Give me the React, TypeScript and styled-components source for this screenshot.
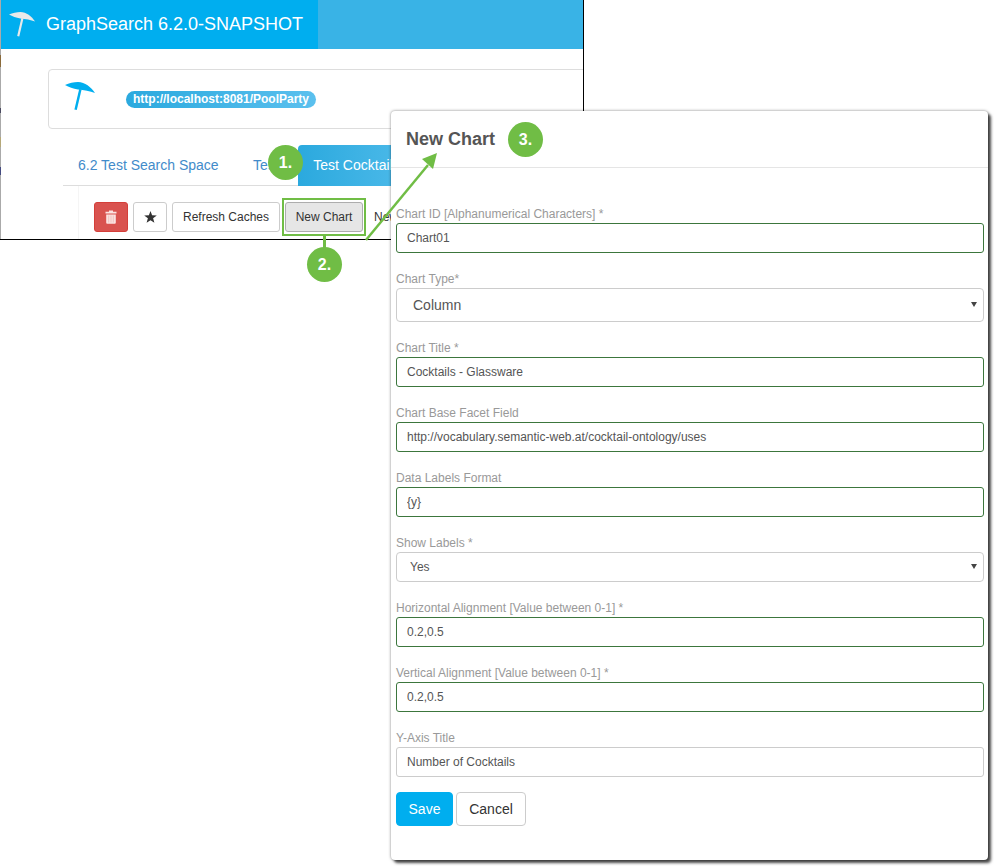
import React, { ReactElement } from "react";
import styled, { createGlobalStyle } from "styled-components";

const GREEN = "#70bd45";
const BLUE = "#00aeef";

const GlobalStyle = createGlobalStyle`
  html, body {
    margin: 0;
    padding: 0;
    background: #fff;
    font-family: "Liberation Sans", Arial, sans-serif;
  }
`;

function Umbrella({ color, width }: { color: string; width: number }): ReactElement {
  return (
    <svg width={width} height={(width * 29) / 31} viewBox='0 0 31 29'>
      <path d='M0 3C4 1 9 0 13 0c7 0 13 5 17 11-5-2-11-3-17-3.500C8 7 4 5 0 3z' fill={color} />
      <path d='M14.200 7 L16.600 7.500 L11.800 28 L9.400 27.500 Z' fill={color} />
    </svg>
  );
}

function TrashIcon(): ReactElement {
  return (
    <svg width='12' height='14' viewBox='0 0 12 14'>
      <path
        d='M4 0.500h4v1.200h3.500v1.800h-11v-1.800H4z M1.200 4.500h9.600v8.200a1 1 0 0 1-1 1H2.200a1 1 0 0 1-1-1z'
        fill='#fbe3e1'
      />
      <path d='M3.700 5.500v7M6 5.500v7M8.300 5.500v7' stroke='#eeb4b0' strokeWidth='0.7' />
    </svg>
  );
}

function StarIcon(): ReactElement {
  return (
    <svg width='13' height='12' viewBox='0 0 13 12'>
      <path
        d='M6.500 0 8.100 4.300 12.800 4.500 9.100 7.300 10.400 11.800 6.500 9.200 2.600 11.800 3.900 7.300 0.200 4.500 4.900 4.300z'
        fill='#333'
      />
    </svg>
  );
}

function TextField({
  label,
  value,
  valid = true,
}: {
  label: string;
  value: string;
  valid?: boolean;
}): ReactElement {
  return (
    <Field>
      <FieldLabel>{label}</FieldLabel>
      <TextInput $valid={valid} readOnly value={value} />
    </Field>
  );
}

function App(): ReactElement {
  return (
    <Page>
      <GlobalStyle />
      <BackWindow>
        <TopBar>
          <Brand>
            <BrandLogo>
              <Umbrella color='#e9e9e9' width={27} />
            </BrandLogo>
            GraphSearch 6.2.0-SNAPSHOT
          </Brand>
        </TopBar>
        <ServerCard>
          <CardLogo>
            <Umbrella color={BLUE} width={31} />
          </CardLogo>
          <ServerPill>http://localhost:8081/PoolParty</ServerPill>
        </ServerCard>
        <Tabs>
          <Tab>6.2 Test Search Space</Tab>
          <Tab>Test</Tab>
          <Tab $active>Test Cocktails</Tab>
        </Tabs>
        <Toolbar>
          <Button $variant='danger' $width={34}>
            <TrashIcon />
          </Button>
          <Button $width={34}>
            <StarIcon />
          </Button>
          <Button $width={108}>Refresh Caches</Button>
          <Button $variant='pressed' $width={78}>
            New Chart
          </Button>
          <PlainButton>New</PlainButton>
        </Toolbar>
      </BackWindow>

      <ChartDialog>
        <DialogHeader>
          <DialogTitle>New Chart</DialogTitle>
        </DialogHeader>
        <DialogBody>
          <TextField label='Chart ID [Alphanumerical Characters] *' value='Chart01' />
          <Field>
            <FieldLabel>Chart Type*</FieldLabel>
            <SelectWrap>
              <Select $large defaultValue='Column'>
                <option>Column</option>
              </Select>
            </SelectWrap>
          </Field>
          <TextField label='Chart Title *' value='Cocktails - Glassware' />
          <TextField
            label='Chart Base Facet Field'
            value='http://vocabulary.semantic-web.at/cocktail-ontology/uses'
          />
          <TextField label='Data Labels Format' value='{y}' />
          <Field>
            <FieldLabel>Show Labels *</FieldLabel>
            <SelectWrap>
              <Select defaultValue='Yes'>
                <option>Yes</option>
              </Select>
            </SelectWrap>
          </Field>
          <TextField label='Horizontal Alignment [Value between 0-1] *' value='0.2,0.5' />
          <TextField label='Vertical Alignment [Value between 0-1] *' value='0.2,0.5' />
          <TextField label='Y-Axis Title' value='Number of Cocktails' valid={false} />
          <DialogActions>
            <SaveButton>Save</SaveButton>
            <CancelButton>Cancel</CancelButton>
          </DialogActions>
        </DialogBody>
      </ChartDialog>

      <Highlight />
      <Arrow width='995' height='866' viewBox='0 0 995 866'>
        <line x1='324.500' y1='236' x2='324.500' y2='250' stroke={GREEN} strokeWidth='3' />
        <line x1='366' y1='240' x2='428' y2='165' stroke={GREEN} strokeWidth='2.500' />
        <polygon points='437,153 422,159 433,169' fill={GREEN} />
      </Arrow>
      <Step $x={268} $y={145}>1.</Step>
      <Step $x={307} $y={247}>2.</Step>
      <Step $x={508} $y={122}>3.</Step>
    </Page>
  );
}

export default App;

const Page = styled.div`
  position: relative;
  width: 995px;
  height: 866px;
  overflow: hidden;
  background: #fff;
`;

const BackWindow = styled.div`
  position: relative;
  width: 584px;
  height: 240px;
  box-sizing: border-box;
  padding-left: 1px;
  border-right: 1px solid #000;
  border-bottom: 1px solid #000;
  overflow: hidden;

  /* bits of the desktop behind the window, along its left edge */
  &::before {
    content: "";
    position: absolute;
    left: 0;
    top: 0;
    bottom: 0;
    width: 1px;
    background: linear-gradient(
      #aaa 0 55px,
      #8a6a3a 55px 67px,
      #aaa 67px 108px,
      #4a4a60 108px 113px,
      #aaa 113px 137px,
      #b5a878 137px 147px,
      #aaa 147px 167px,
      #444a80 167px 175px,
      #aaa 175px
    );
  }
`;

const TopBar = styled.div`
  height: 49px;
  background: #39b3e6;
`;

const Brand = styled.div`
  display: flex;
  align-items: center;
  width: 317px;
  height: 100%;
  background: ${BLUE};
  color: #fff;
  font-size: 18px;
`;

const BrandLogo = styled.div`
  display: flex;
  width: 27px;
  margin: 0 10px 0 8px;
`;

const ServerCard = styled.div`
  display: flex;
  align-items: center;
  width: 600px;
  height: 60px;
  box-sizing: border-box;
  margin: 20px 0 0 47px;
  padding: 0 0 0 16px;
  border: 1px solid #ddd;
  border-radius: 4px;
`;

const CardLogo = styled.div`
  display: flex;
  margin-bottom: 6px;
`;

const ServerPill = styled.span`
  margin-left: 30px;
  padding: 0 7px;
  height: 17px;
  line-height: 17px;
  border-radius: 9px;
  background: linear-gradient(90deg, #2ba9de, #5bc0ee);
  color: #fff;
  font-size: 12px;
  font-weight: bold;
`;

const Tabs = styled.div`
  display: flex;
  gap: 4.5px;
  height: 40px;
  margin: 16px 0 0 62px;
  border-bottom: 1px solid #ddd;
`;

const Tab = styled.div<{ $active?: boolean }>`
  flex: none;
  height: 41px;
  box-sizing: border-box;
  padding: 0 15px;
  line-height: 40px;
  font-size: 14px;
  border-radius: 4px 4px 0 0;
  color: ${({ $active }) => ($active ? "#fff" : "#428bca")};
  background: ${({ $active }) =>
    $active ? "linear-gradient(90deg, #2ba9de, #4fbbea)" : "transparent"};
`;

const Toolbar = styled.div`
  display: flex;
  align-items: center;
  gap: 5px;
  height: 53px;
  box-sizing: border-box;
  margin-left: 77px;
  padding: 16px 0 7px 15px;
  border-left: 1px solid #f5f5f5;
`;

const Button = styled.div<{ $variant?: "danger" | "pressed"; $width: number }>`
  display: flex;
  flex: none;
  align-items: center;
  justify-content: center;
  width: ${({ $width }) => $width}px;
  height: 30px;
  box-sizing: border-box;
  border-radius: 3px;
  font-size: 12px;
  color: #333;
  border: 1px solid
    ${({ $variant }) =>
      $variant === "danger" ? "#d43f3a" : $variant === "pressed" ? "#adadad" : "#ccc"};
  background: ${({ $variant }) =>
    $variant === "danger" ? "#d9534f" : $variant === "pressed" ? "#e6e6e6" : "#fff"};
`;

const PlainButton = styled.div`
  margin-left: 6px;
  font-size: 12px;
  color: #333;
`;

const ChartDialog = styled.div`
  position: absolute;
  left: 391px;
  top: 111px;
  width: 597px;
  height: 749px;
  background: #fff;
  border-radius: 4px;
  box-shadow: 0 0 3px rgba(0, 0, 0, 0.5), 3px 3px 3px rgba(0, 0, 0, 0.7);
`;

const DialogHeader = styled.div`
  display: flex;
  align-items: center;
  height: 56px;
  padding-left: 15px;
  border-bottom: 1px solid #e5e5e5;
`;

const DialogTitle = styled.h4`
  margin: 0;
  font-size: 18px;
  font-weight: bold;
  color: #555;
`;

const DialogBody = styled.div`
  display: flex;
  flex-direction: column;
  gap: 19px;
  padding: 39px 4px 0 5px;
`;

const Field = styled.div`
  display: flex;
  flex-direction: column;
`;

const FieldLabel = styled.label`
  height: 13px;
  margin-bottom: 3px;
  line-height: 14px;
  font-size: 12px;
  color: #999;
`;

const TextInput = styled.input<{ $valid: boolean }>`
  width: 100%;
  height: 30px;
  box-sizing: border-box;
  padding: 0 10px;
  font-family: inherit;
  font-size: 12px;
  color: #555;
  background: #fff;
  outline: none;
  border: 1px solid ${({ $valid }) => ($valid ? "#3c763d" : "#ccc")};
  border-radius: 3px;
`;

const SelectWrap = styled.div`
  position: relative;

  &::after {
    content: "";
    position: absolute;
    right: 7px;
    top: 50%;
    margin-top: -3px;
    border-style: solid;
    border-width: 5px 3px 0 3px;
    border-color: #444 transparent transparent transparent;
  }
`;

const Select = styled.select<{ $large?: boolean }>`
  display: block;
  width: 100%;
  height: ${({ $large }) => ($large ? 34 : 30)}px;
  box-sizing: border-box;
  padding: 0 0 0 ${({ $large }) => ($large ? 16 : 13)}px;
  font-family: inherit;
  font-size: ${({ $large }) => ($large ? 14 : 12)}px;
  color: #555;
  background: #fff;
  outline: none;
  appearance: none;
  border: 1px solid #ccc;
  border-radius: 4px;
`;

const DialogActions = styled.div`
  display: flex;
  gap: 3px;
  margin-top: -4px;
`;

const SaveButton = styled.button`
  width: 57px;
  height: 34px;
  padding: 0;
  font-family: inherit;
  font-size: 14px;
  color: #fff;
  background: ${BLUE};
  border: 1px solid ${BLUE};
  border-radius: 4px;
`;

const CancelButton = styled.button`
  width: 70px;
  height: 34px;
  padding: 0;
  font-family: inherit;
  font-size: 14px;
  color: #333;
  background: #fff;
  border: 1px solid #ccc;
  border-radius: 4px;
`;

const Highlight = styled.div`
  position: absolute;
  left: 282px;
  top: 198px;
  width: 84px;
  height: 38px;
  box-sizing: border-box;
  border: 2px solid ${GREEN};
`;

const Arrow = styled.svg`
  position: absolute;
  left: 0;
  top: 0;
  pointer-events: none;
`;

const Step = styled.div<{ $x: number; $y: number }>`
  position: absolute;
  left: ${({ $x }) => $x}px;
  top: ${({ $y }) => $y}px;
  display: flex;
  align-items: center;
  justify-content: center;
  width: 35px;
  height: 35px;
  border-radius: 50%;
  background: ${GREEN};
  color: #fff;
  font-size: 16px;
  font-weight: bold;
`;
